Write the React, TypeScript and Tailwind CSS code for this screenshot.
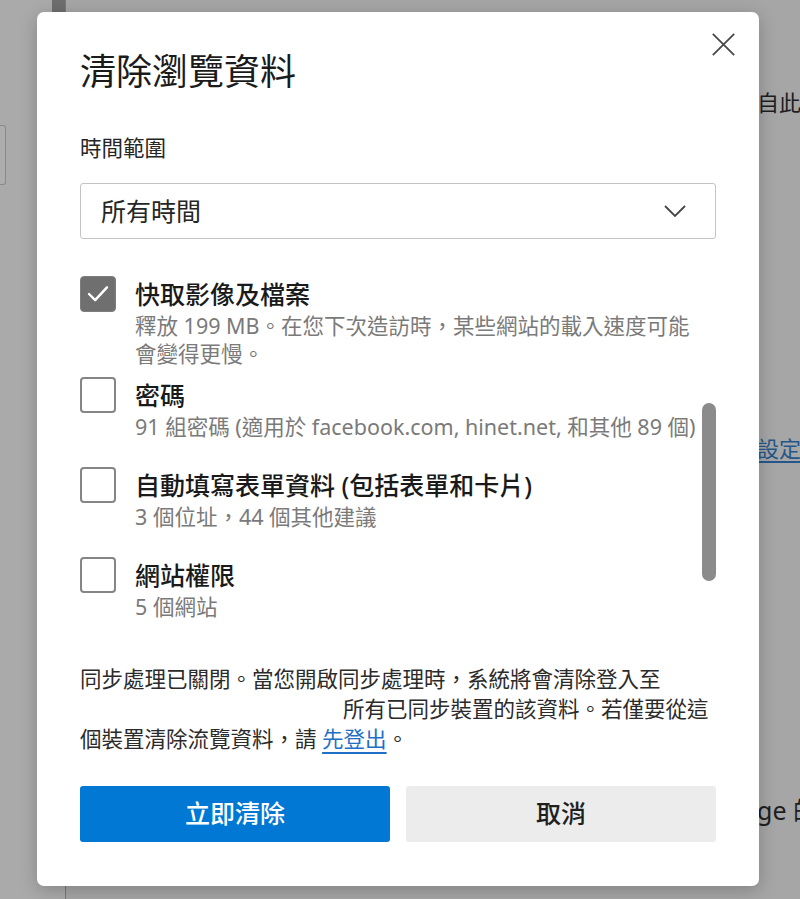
import React from "react";

const FONT = { fontFamily: '"Noto Sans", "Noto Sans CJK TC", sans-serif' };

function CheckBox({ checked }: { checked: boolean }) {
  if (checked) {
    return (
      <div className="w-[36px] h-[36px] shrink-0 rounded-[4px] bg-[#6f6f6f] border border-[#7e7e7e] flex items-center justify-center">
        <svg width="36" height="36" viewBox="0 0 36 36" fill="none">
          <path d="M8.5 18 L15 24.5 L27.5 11" stroke="#ffffff" strokeWidth="2.6" strokeLinecap="round" strokeLinejoin="round" />
        </svg>
      </div>
    );
  }
  return <div className="w-[36px] h-[36px] shrink-0 rounded-[4px] bg-white border-2 border-[#858585]" />;
}

function Item({ checked, title, lines, className }: { checked: boolean; title: string; lines: string[]; className?: string }) {
  return (
    <div className={"flex gap-[19px] " + (className ?? "")}>
      <CheckBox checked={checked} />
      <div className="flex flex-col">
        <div className="text-[25px] leading-[36px] font-medium text-[#1a1a1a] whitespace-nowrap">{title}</div>
        {lines.map((l, i) => (
          <div key={i} className="text-[21.5px] leading-[28px] text-[#7a7a7a] whitespace-nowrap">
            {l}
          </div>
        ))}
      </div>
    </div>
  );
}

export default function App() {
  return (
    <div className="w-[800px] h-[899px] relative overflow-hidden bg-[#a6a6a6] flex" style={FONT}>
      {/* background page */}
      <div className="w-[66px] shrink-0 h-full flex bg-[#aaaaaa] border-r border-[#7a7a7a]">
        <div className="w-[52px] flex flex-col">
          <div className="mt-[125px] w-[6px] h-[60px] border border-l-0 border-[#8a8a8a] rounded-r-[3px] bg-[#adadad]" />
        </div>
        <div className="w-[13px] h-[40px] bg-[#6e6e6e]" />
      </div>
      <div className="flex-1 min-w-0 flex flex-col pl-[691px] text-[#1e1e1e] whitespace-nowrap">
        <div className="mt-[88px] text-[22px] leading-[28px]">自此</div>
        <div className="mt-[318px] text-[22px] leading-[28px] text-[#24578a] underline underline-offset-[4px]">設定</div>
        <div className="mt-[334px] text-[25px] leading-[28px]">ge 的</div>
      </div>

      {/* modal dialog */}
      <div className="absolute left-[37px] top-[12px] w-[722px] bg-white rounded-[7px] shadow-[0_4px_18px_rgba(0,0,0,0.22)] pt-[36px] px-[43px] pb-[44px] flex flex-col">
        <button className="absolute top-[21px] right-[24px] w-[23px] h-[23px]" aria-label="close">
          <svg width="23" height="23" viewBox="0 0 23 23" fill="none">
            <path d="M0.8 0.8 L22.2 22.2 M22.2 0.8 L0.8 22.2" stroke="#454545" strokeWidth="1.7" />
          </svg>
        </button>

        <div className="text-[36px] leading-[48px] text-[#1b1b1b]">清除瀏覽資料</div>

        <div className="mt-[38px] text-[21.5px] leading-[28px] text-[#262626]">時間範圍</div>

        <div className="mt-[21px] h-[56px] border border-[#c4c4c4] rounded-[3px] flex items-center justify-between pl-[20px] pr-[29px]">
          <span className="text-[25px] leading-[32px] text-[#262626]">所有時間</span>
          <svg width="22" height="14" viewBox="0 0 22 14" fill="none">
            <path d="M1 2 L11 12 L21 2" stroke="#454545" strokeWidth="1.8" />
          </svg>
        </div>

        <div className="mt-[37px] relative flex flex-col">
          <Item
            checked
            title="快取影像及檔案"
            lines={["釋放 199 MB。在您下次造訪時，某些網站的載入速度可能", "會變得更慢。"]}
          />
          <Item
            className="mt-[9px]"
            checked={false}
            title="密碼"
            lines={["91 組密碼 (適用於 facebook.com, hinet.net, 和其他 89 個)"]}
          />
          <Item
            className="mt-[26px]"
            checked={false}
            title="自動填寫表單資料 (包括表單和卡片)"
            lines={["3 個位址，44 個其他建議"]}
          />
          <Item className="mt-[26px]" checked={false} title="網站權限" lines={["5 個網站"]} />
          <div className="absolute right-0 top-[127px] w-[14px] h-[178px] rounded-full bg-[#8b8b8b]" />
        </div>

        <div className="mt-[43px] text-[21.5px] leading-[30px] text-[#2b2b2b] whitespace-nowrap">
          <div>同步處理已關閉。當您開啟同步處理時，系統將會清除登入至</div>
          <div className="pl-[263px]">所有已同步裝置的該資料。若僅要從這</div>
          <div>
            個裝置清除流覽資料，請{" "}
            <a className="text-[#1f6fc5] underline underline-offset-[5px]">先登出</a>。
          </div>
        </div>

        <div className="mt-[32px] flex gap-[16px]">
          <button className="flex-1 h-[56px] rounded-[3px] bg-[#0078d4] text-white text-[25px] font-medium">立即清除</button>
          <button className="flex-1 h-[56px] rounded-[3px] bg-[#ececec] text-[#1f1f1f] text-[25px] font-medium">取消</button>
        </div>
      </div>
    </div>
  );
}
